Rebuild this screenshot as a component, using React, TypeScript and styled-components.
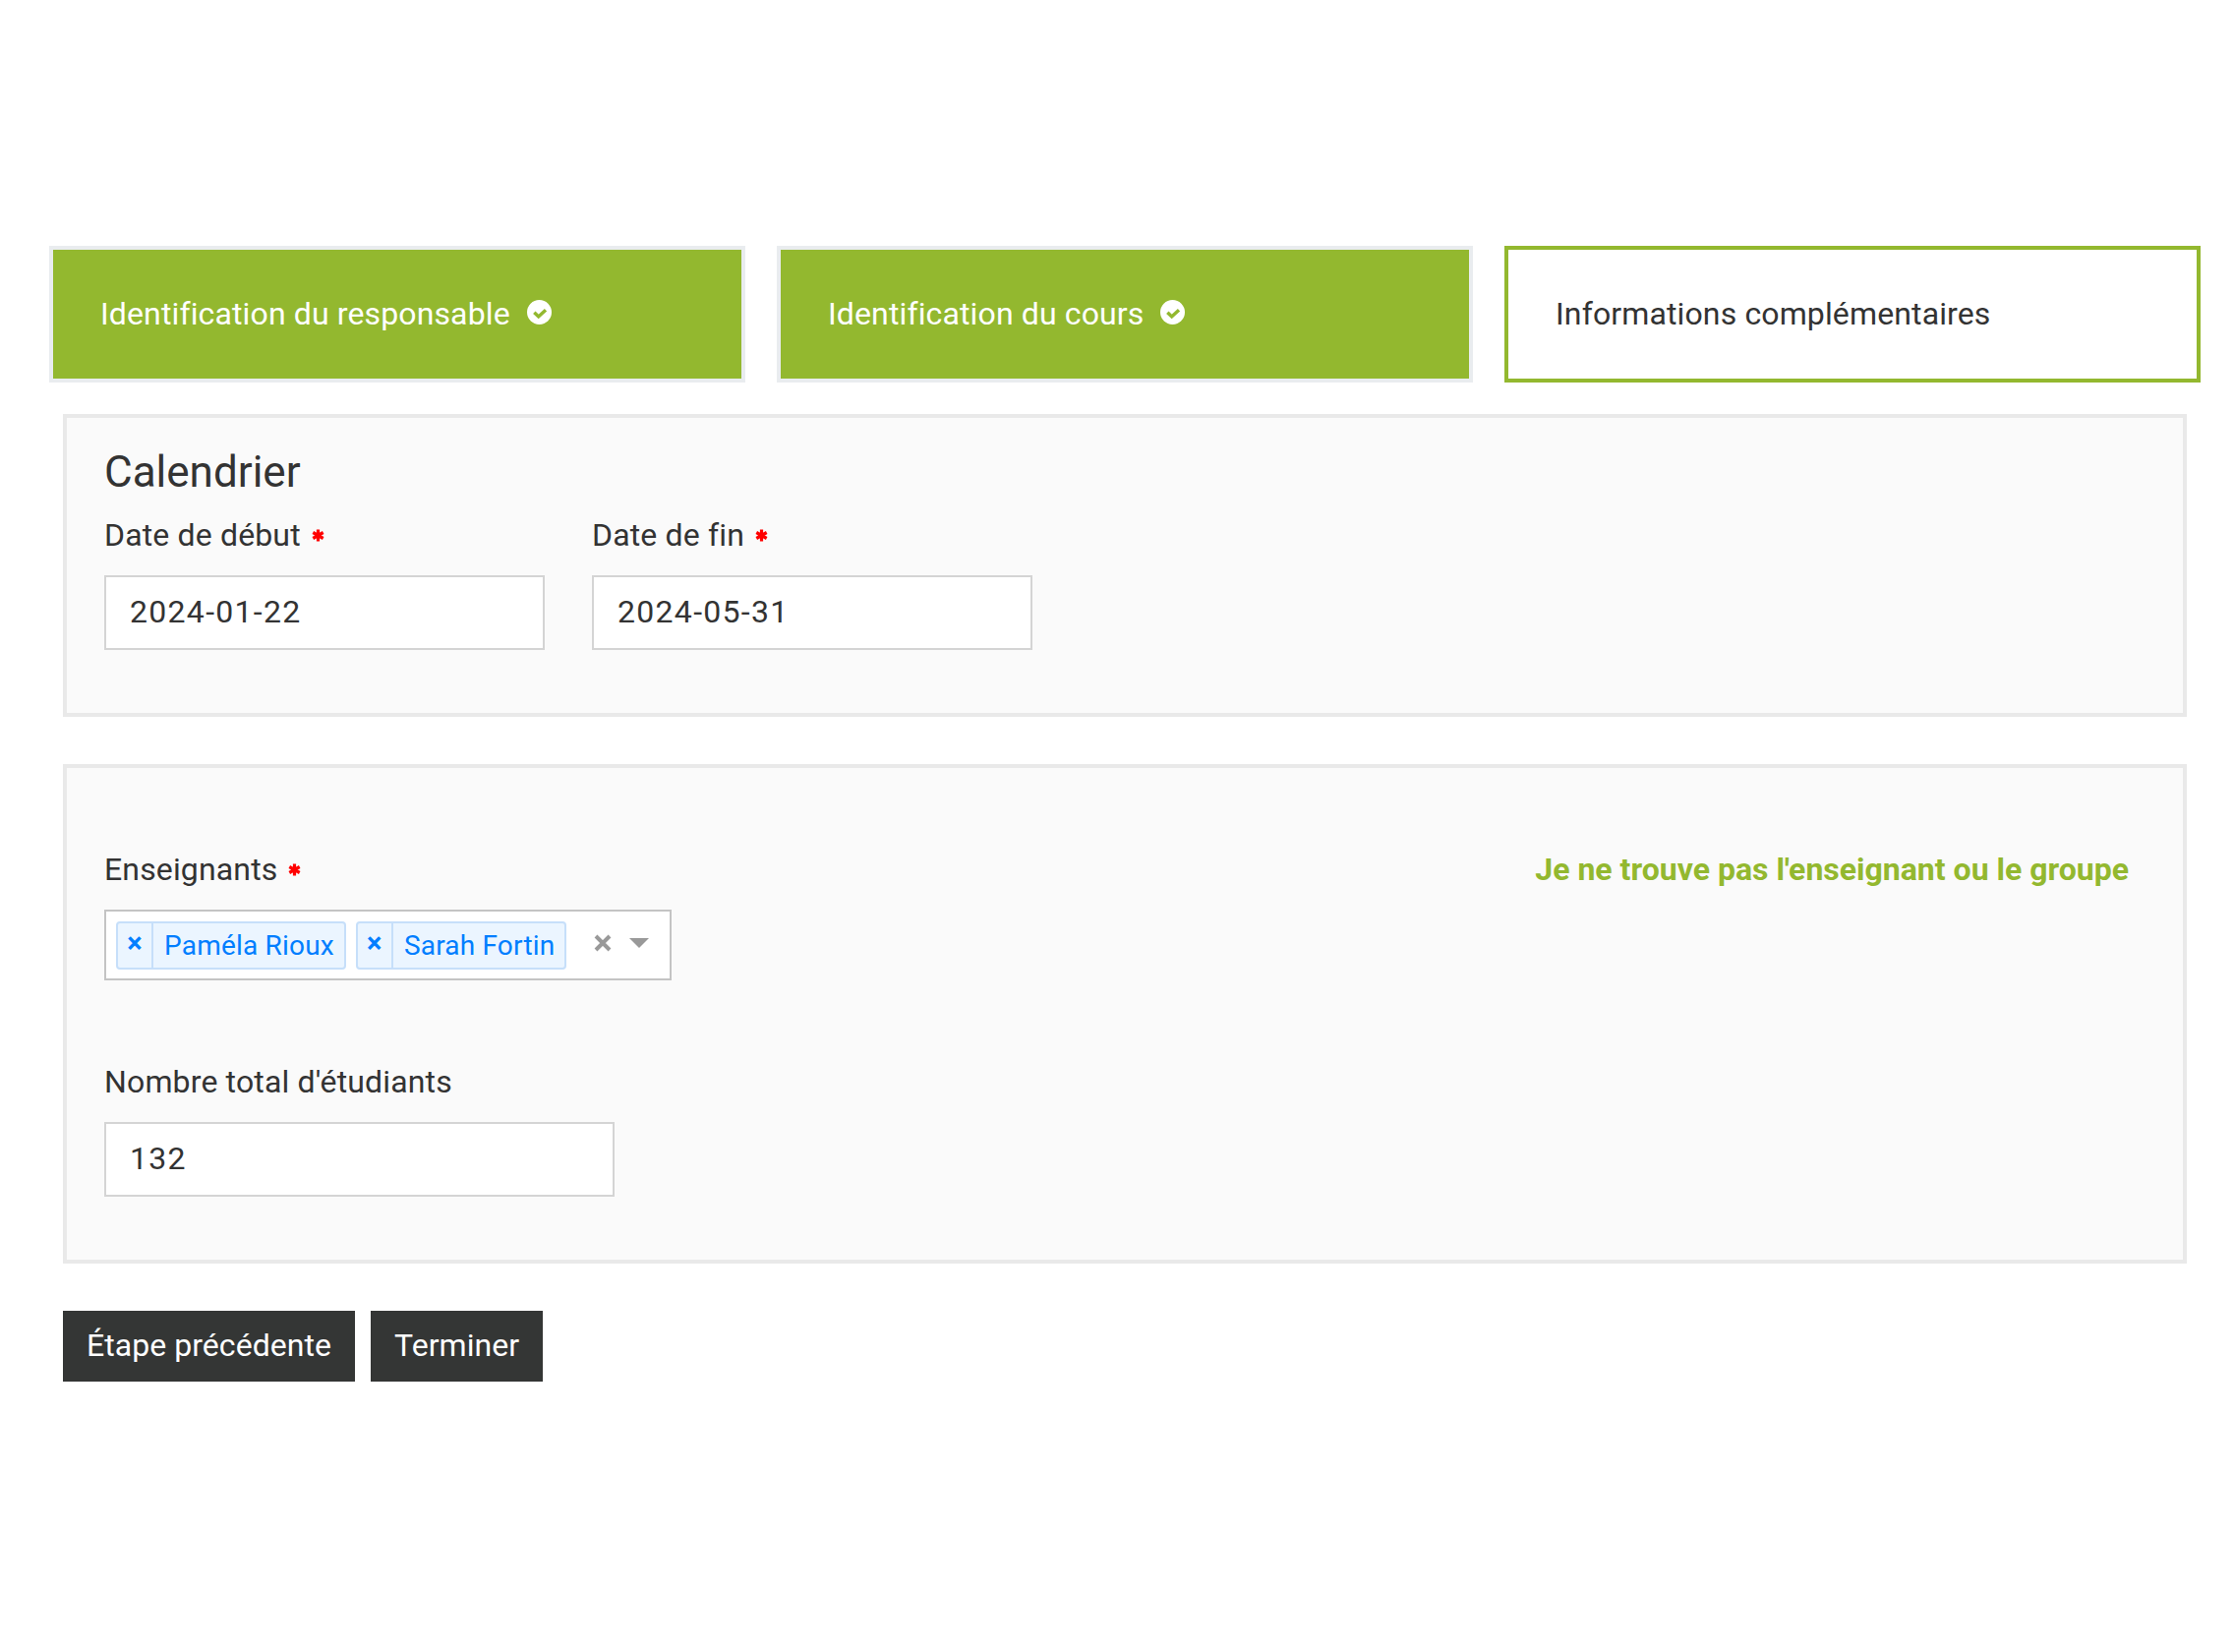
import React from "react";
import styled, { createGlobalStyle } from "styled-components";

const Global = createGlobalStyle`
  html, body { margin: 0; padding: 0; background: #fff; }
  body { font-family: Roboto, "Liberation Sans", sans-serif; color: #333; }
  * { box-sizing: border-box; }
`;

const Page = styled.div`
  width: 2272px;
  height: 1680px;
  padding: 250px 34px 0 50px;
`;

const Steps = styled.div`
  display: grid;
  grid-template-columns: repeat(3, 708px);
  column-gap: 32px;
`;

const Step = styled.div<{ $done?: boolean }>`
  height: 139px;
  display: flex;
  align-items: center;
  gap: 17px;
  padding-left: 48px;
  padding-bottom: 2px;
  font-size: 32px;
  letter-spacing: 0.13px;
  border: 4px solid ${(p) => (p.$done ? "#e9ecef" : "#93b82f")};
  background: ${(p) => (p.$done ? "#93b82f" : "#fff")};
  color: ${(p) => (p.$done ? "#fff" : "#333")};
`;

const Check = styled.svg`
  width: 25px;
  height: 25px;
  flex: none;
  margin-top: -3px;
`;

const Main = styled.div`
  margin: 32px 14px 0;
  width: 2160px;
`;

const Panel = styled.section<{ $top: number; $height: number }>`
  height: ${(p) => p.$height}px;
  padding: ${(p) => p.$top}px 38px 0;
  background: #fafafa;
  border: 4px solid #e9e9e9;
  & + & {
    margin-top: 48px;
  }
`;

const Heading = styled.h2`
  margin: 0 0 19px;
  font-size: 44px;
  font-weight: 400;
  line-height: 52px;
  color: #333;
`;

const FieldRow = styled.div`
  display: flex;
  gap: 48px;
`;

const Label = styled.label`
  display: flex;
  align-items: center;
  height: 38px;
  font-size: 32px;
  line-height: 38px;
  letter-spacing: 0.15px;
  color: #333;
`;

const RequiredMark = styled.svg`
  width: 13px;
  height: 13px;
  margin-left: 11px;
  flex: none;
`;

const TextInput = styled.div<{ $width: number }>`
  width: ${(p) => p.$width}px;
  height: 76px;
  margin-top: 22px;
  padding: 0 0 2px 24px;
  display: flex;
  align-items: center;
  background: #fff;
  border: 2px solid #d4d4d4;
  font-size: 32px;
  letter-spacing: 1.3px;
  color: #333;
`;

const LabelRow = styled.div`
  display: flex;
  justify-content: space-between;
  padding-right: 17px;
`;

const HelpLink = styled.a`
  font-size: 32px;
  line-height: 38px;
  font-weight: 700;
  color: #93b82f;
`;

const MultiSelect = styled.div`
  width: 577px;
  height: 72px;
  margin-top: 22px;
  padding-left: 10px;
  display: flex;
  align-items: center;
  gap: 10px;
  background: #fff;
  border: 2px solid #c4c4c4;
`;

const Chip = styled.div`
  height: 49px;
  display: flex;
  align-items: stretch;
  border: 2px solid #c6dffa;
  border-radius: 4px;
  background: #ebf5ff;
  color: #007eff;
  font-size: 28px;
  letter-spacing: 0.2px;
`;

const ChipRemove = styled.span`
  width: 36px;
  display: flex;
  align-items: center;
  justify-content: center;
  border-right: 2px solid #c6dffa;
  font-size: 29px;
  font-weight: 700;
  padding-bottom: 4px;
`;

const ChipText = styled.span`
  display: flex;
  align-items: center;
  padding: 0 10px 0 11px;
  white-space: nowrap;
`;

const Controls = styled.div`
  display: flex;
  align-items: center;
  margin-left: 18px;
  margin-top: -4px;
  gap: 18px;
`;

const ClearX = styled.svg`
  width: 18px;
  height: 18px;
`;

const Arrow = styled.span`
  width: 0;
  height: 0;
  border-left: 10.5px solid transparent;
  border-right: 10.5px solid transparent;
  border-top: 10px solid #999;
`;

const StudentsField = styled.div`
  margin-top: 84px;
`;

const Actions = styled.div`
  display: flex;
  gap: 16px;
  margin-top: 48px;
`;

const Button = styled.button`
  height: 72px;
  padding: 0 24px 2px;
  border: 0;
  background: #343635;
  color: #fff;
  font-family: Roboto, sans-serif;
  font-size: 32px;
  letter-spacing: 0.05px;
`;

const CheckIcon = () => (
  <Check viewBox="0 0 25 25">
    <circle cx="12.5" cy="12.5" r="12.5" fill="#fff" />
    <path d="M7.3 12.7L11.7 17L19 10.3" fill="none" stroke="#93b82f" strokeWidth="3.4" />
  </Check>
);

const Star = () => (
  <RequiredMark viewBox="0 0 13 13">
    <path d="M6.5 0.5v12M1.3 3.5l10.4 6M11.7 3.5l-10.4 6" stroke="#f00" strokeWidth="3.2" fill="none" />
  </RequiredMark>
);

export default function App() {
  return (
    <Page>
      <Global />
      <Steps>
        <Step $done>
          Identification du responsable <CheckIcon />
        </Step>
        <Step $done>
          Identification du cours <CheckIcon />
        </Step>
        <Step>Informations complémentaires</Step>
      </Steps>
      <Main>
        <Panel $height={308} $top={29}>
          <Heading>Calendrier</Heading>
          <FieldRow>
            <div>
              <Label>
                Date de début<Star />
              </Label>
              <TextInput $width={448}>2024-01-22</TextInput>
            </div>
            <div>
              <Label>
                Date de fin<Star />
              </Label>
              <TextInput $width={448}>2024-05-31</TextInput>
            </div>
          </FieldRow>
        </Panel>
        <Panel $height={508} $top={84}>
          <LabelRow>
            <Label>
              Enseignants<Star />
            </Label>
            <HelpLink>Je ne trouve pas l'enseignant ou le groupe</HelpLink>
          </LabelRow>
          <MultiSelect>
            <Chip>
              <ChipRemove>×</ChipRemove>
              <ChipText>Paméla Rioux</ChipText>
            </Chip>
            <Chip>
              <ChipRemove>×</ChipRemove>
              <ChipText>Sarah Fortin</ChipText>
            </Chip>
            <Controls>
              <ClearX viewBox="0 0 18 18">
                <path d="M2 2l14 14M16 2L2 16" stroke="#999" strokeWidth="4" />
              </ClearX>
              <Arrow />
            </Controls>
          </MultiSelect>
          <StudentsField>
            <Label>Nombre total d'étudiants</Label>
            <TextInput $width={519}>132</TextInput>
          </StudentsField>
        </Panel>
        <Actions>
          <Button>Étape précédente</Button>
          <Button>Terminer</Button>
        </Actions>
      </Main>
    </Page>
  );
}
